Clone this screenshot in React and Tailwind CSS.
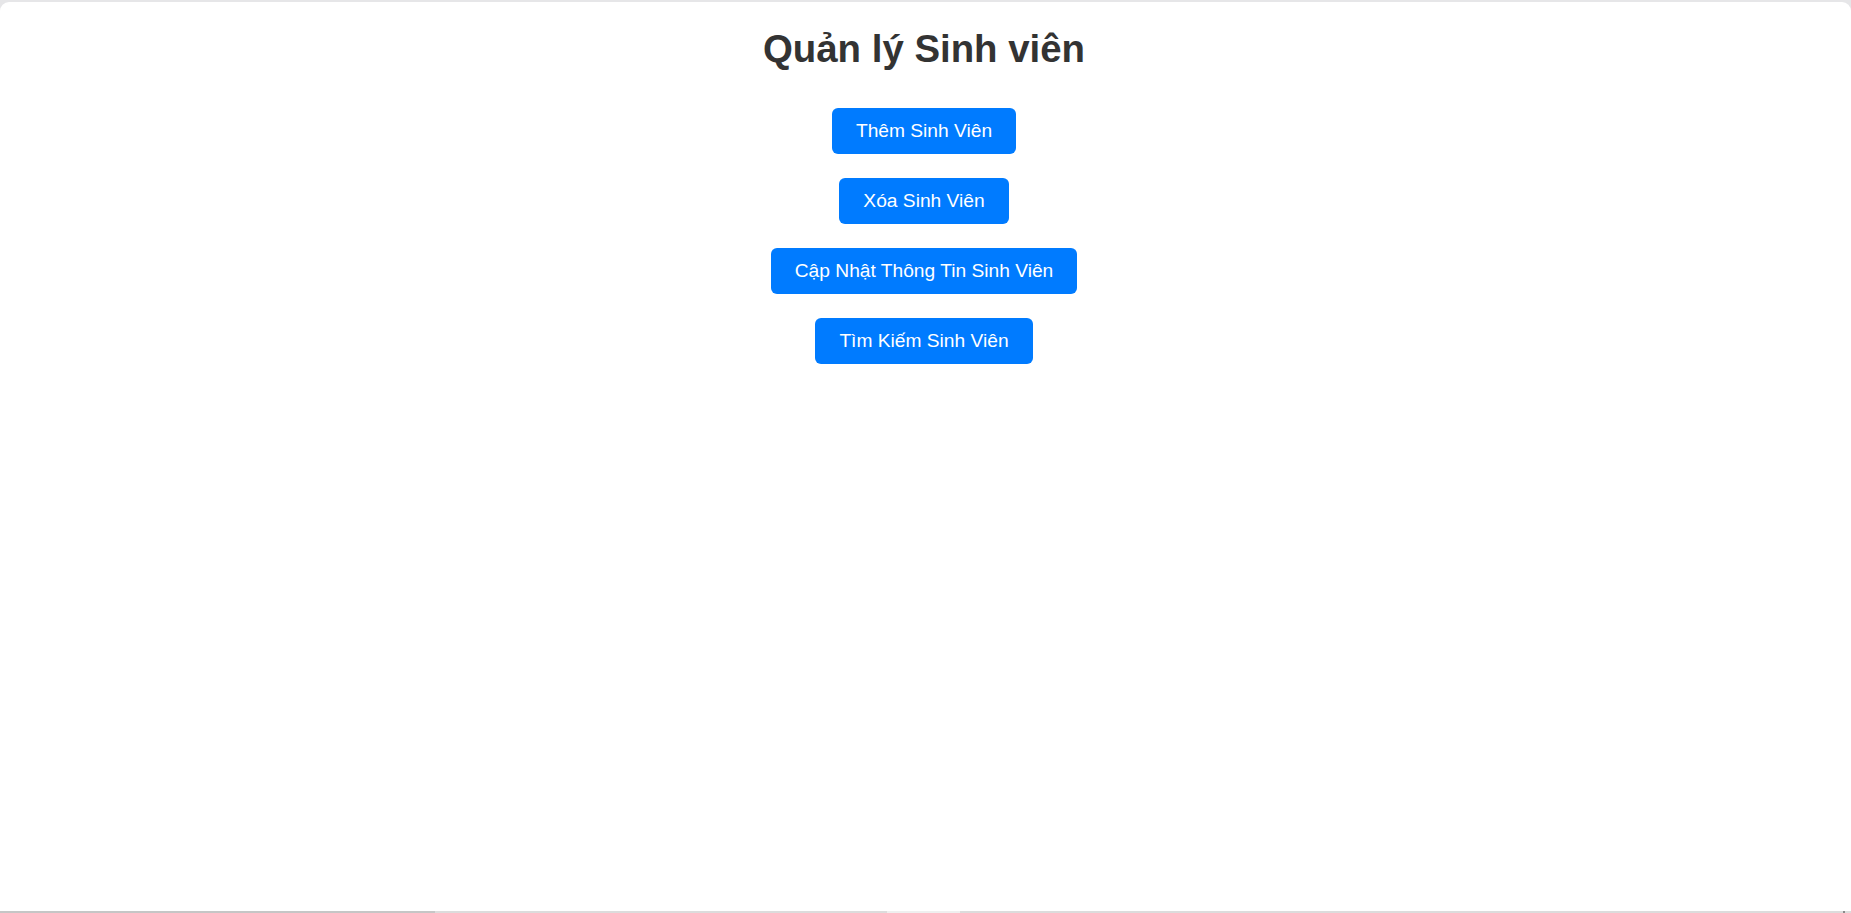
import React from "react";

const buttons = [
  "Thêm Sinh Viên",
  "Xóa Sinh Viên",
  "Cập Nhật Thông Tin Sinh Viên",
  "Tìm Kiếm Sinh Viên",
];

export default function App() {
  return (
    <div
      className="h-[913px] w-full bg-[#e6e6e8] flex flex-col overflow-hidden"
      style={{ fontFamily: '"Liberation Sans", Arial, sans-serif' }}
    >
      <div className="mt-[2px] flex-1 bg-white rounded-t-[9px] flex flex-col items-center pt-[25px] pr-[3px]">
        <h1 className="text-[38.4px] leading-[44px] font-bold text-[#333333] m-0">
          Quản lý Sinh viên
        </h1>
        <div className="mt-[37px] flex flex-col items-center gap-[24px]">
          {buttons.map((b) => (
            <button
              key={b}
              className="bg-[#007bff] text-white text-[19.2px] leading-[22px] px-[24px] py-[12px] rounded-[6px]"
            >
              {b}
            </button>
          ))}
        </div>
      </div>
      <div className="h-[2px] flex">
        <div className="w-[435px] bg-[#c6c6c6]" />
        <div className="w-[452px] bg-[#dcdcdc]" />
        <div className="w-[73px] bg-[#efefef]" />
        <div className="flex-1 bg-[#dcdcdc]" />
        <div className="w-[2px] bg-[#8a8a8a]" />
        <div className="w-[6px] bg-[#dcdcdc]" />
      </div>
    </div>
  );
}
